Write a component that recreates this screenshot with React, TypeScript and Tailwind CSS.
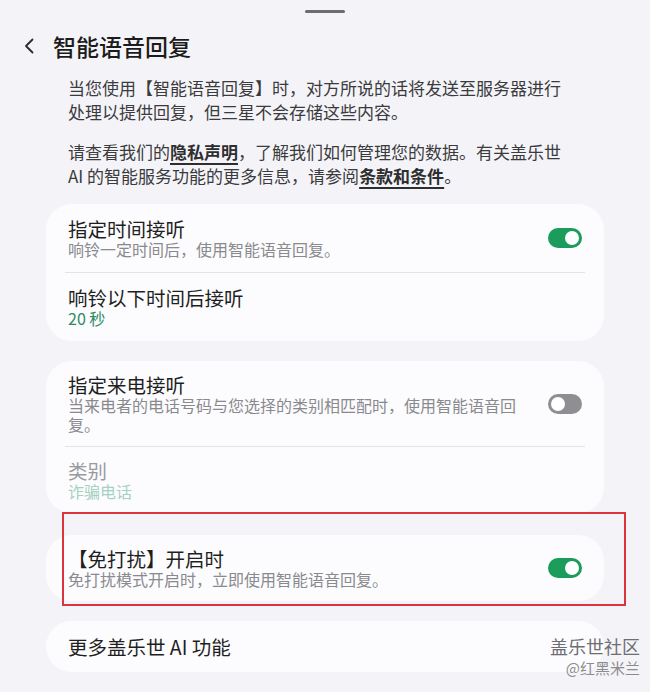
import type { ReactNode } from "react";

function Toggle({ on }: { on: boolean }) {
  return (
    <div
      className={
        on
          ? "flex h-[20px] w-[34px] shrink-0 items-center justify-end rounded-full bg-[#1b9c5b] px-[3px]"
          : "flex h-[20px] w-[34px] shrink-0 items-center justify-start rounded-full bg-[#8f8f93] px-[3px]"
      }
    >
      <div className="h-[14px] w-[14px] rounded-full bg-white" />
    </div>
  );
}

function Row({
  title,
  sub,
  subClass = "text-[#8a8a8e]",
  titleClass = "text-[#1f1f1f]",
  toggle,
  py = "py-[13px]",
}: {
  title: ReactNode;
  sub?: ReactNode;
  subClass?: string;
  titleClass?: string;
  toggle?: boolean;
  py?: string;
}) {
  return (
    <div className={`flex items-center gap-[24px] px-[22px] ${py}`}>
      <div className="flex-1">
        <div className={`text-[19.5px] leading-[23px] ${titleClass}`}>{title}</div>
        {sub && <div className={`text-[16px] leading-[19px] ${subClass}`}>{sub}</div>}
      </div>
      {toggle !== undefined && <Toggle on={toggle} />}
    </div>
  );
}

function Card({ children, className = "" }: { children: ReactNode; className?: string }) {
  return <div className={`rounded-[26px] bg-[#fcfcfe] ${className}`}>{children}</div>;
}

const Divider = () => <div className="mx-[19px] h-px bg-[#e3e3e8]" />;

export default function App() {
  return (
    <div className="relative h-[692px] w-[650px] overflow-hidden bg-[#f4f4f8] font-['Noto_Sans_CJK_SC','Noto_Sans',sans-serif]">
      {/* drag handle */}
      <div className="flex justify-center pt-[10px]">
        <div className="h-[3px] w-[40px] rounded-full bg-[#6d6d70]" />
      </div>

      {/* header */}
      <header className="mt-[17px] flex h-[32px] items-center pl-[24px]">
        <svg width="10" height="16" viewBox="0 0 10 16" fill="none">
          <path d="M8.5 1.5 L2 8 L8.5 14.5" stroke="#2a2a2a" strokeWidth="1.8" strokeLinecap="round" strokeLinejoin="round" />
        </svg>
        <h1 className="ml-[19px] text-[23px] font-medium leading-[32px] text-[#1c1c1c]">智能语音回复</h1>
      </header>

      {/* intro */}
      <div className="mt-[14px] pl-[68px] text-[17px] leading-[24px] text-[#3b3b3e]">
        <p>
          当您使用【智能语音回复】时，对方所说的话将发送至服务器进行
          <br />
          处理以提供回复，但三星不会存储这些内容。
        </p>
        <p className="mt-[16px]">
          请查看我们的
          <span className="font-semibold text-[#2e2e30] underline decoration-[1.5px] underline-offset-[4px]">隐私声明</span>
          ，了解我们如何管理您的数据。有关盖乐世
          <br />
          AI 的智能服务功能的更多信息，请参阅
          <span className="font-semibold text-[#2e2e30] underline decoration-[1.5px] underline-offset-[4px]">条款和条件</span>。
        </p>
      </div>

      {/* settings */}
      <div className="mx-[46px] mt-[16px] flex flex-col">
        <Card>
          <Row title="指定时间接听" sub="响铃一定时间后，使用智能语音回复。" toggle={true} />
          <Divider />
          <Row title="响铃以下时间后接听" sub="20 秒" subClass="text-[#2f8a62]" />
        </Card>

        <Card className="mt-[20px]">
          <Row
            title="指定来电接听"
            sub="当来电者的电话号码与您选择的类别相匹配时，使用智能语音回复。"
            toggle={false}
            py="py-[12px]"
          />
          <Divider />
          <Row title="类别" titleClass="text-[#9a9a9e]" sub="诈骗电话" subClass="text-[#a5d1bf]" py="py-[12px]" />
        </Card>

        <Card className="mt-[22px]">
          <Row title="【免打扰】开启时" sub="免打扰模式开启时，立即使用智能语音回复。" toggle={true} py="py-[12px]" />
        </Card>

        <Card className="mt-[20px]">
          <Row title="更多盖乐世 AI 功能" py="py-[14px]" />
        </Card>
      </div>

      {/* annotation box */}
      <div className="absolute left-[62px] top-[512px] h-[94px] w-[564px] border-2 border-[#d8363c]" />

      {/* watermark */}
      <div className="absolute right-[10px] top-[634px] flex flex-col items-end">
        <span className="text-[18px] leading-[24px] text-[#6e6e72]">盖乐世社区</span>
        <span className="text-[15px] leading-[20px] text-[#8c8c90]">@红黑米兰</span>
      </div>
    </div>
  );
}
